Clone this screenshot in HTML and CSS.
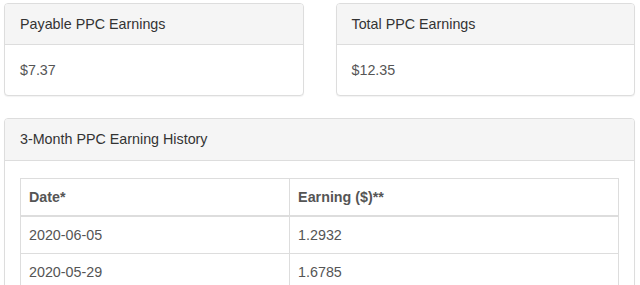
FILE: index.html
```html
<!DOCTYPE html>
<html lang="en">
<head>
  <meta charset="UTF-8">
  <meta name="viewport" content="width=device-width, initial-scale=1.0">
  <title>PPC Earnings</title>
  <link rel="stylesheet" href="styles.css">
</head>
<body>
  <div class="container">
    <div class="row">
      <div class="panel">
        <div class="panel-heading">Payable PPC Earnings</div>
        <div class="panel-body">$7.37</div>
      </div>
      <div class="panel">
        <div class="panel-heading">Total PPC Earnings</div>
        <div class="panel-body">$12.35</div>
      </div>
    </div>

    <div class="panel history">
      <div class="panel-heading">3-Month PPC Earning History</div>
      <div class="panel-body">
        <table class="table">
          <thead>
            <tr>
              <th class="col-date">Date*</th>
              <th>Earning ($)**</th>
            </tr>
          </thead>
          <tbody>
            <tr><td>2020-06-05</td><td>1.2932</td></tr>
            <tr><td>2020-05-29</td><td>1.6785</td></tr>
          </tbody>
        </table>
      </div>
    </div>
  </div>
</body>
</html>
```

FILE: styles.css
```css
* { margin: 0; padding: 0; box-sizing: border-box; }
body { background: #fff; color: #555; font-family: 'Liberation Sans', Arial, sans-serif; font-size: 14.3px; line-height: 20px; }
.container { padding: 3px 5px 0 4px; }
.row { display: grid; grid-template-columns: 1fr 1fr; gap: 32px; }
.panel { background: #fff; border: 1px solid #ddd; border-radius: 4px; box-shadow: 0 1px 1px rgba(0,0,0,0.05); margin-bottom: 22px; }
.panel-heading { background: #f5f5f5; color: #333; padding: 10px 15px; border-bottom: 1px solid #ddd; border-radius: 3px 3px 0 0; }
.panel-body { padding: 15px; }
.history .panel-heading { padding-bottom: 11px; }
.history .panel-body { padding-top: 17px; }
.table { width: 100%; border-collapse: collapse; border: 1px solid #ddd; }
.table th, .table td { padding: 8px; text-align: left; border: 1px solid #ddd; vertical-align: top; }
.table th { font-weight: 700; border-bottom-width: 2px; }
.col-date { width: 45%; }
```
